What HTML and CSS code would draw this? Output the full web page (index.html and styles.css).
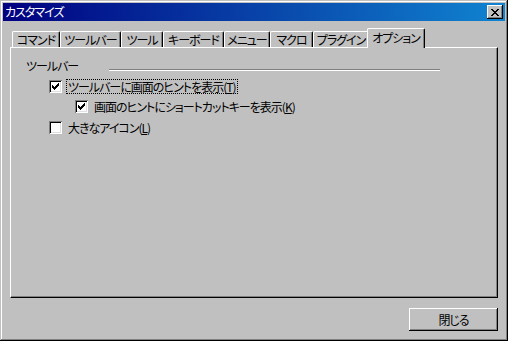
FILE: index.html
```html
<!DOCTYPE html>
<html lang="ja">
<head>
  <meta charset="UTF-8">
  <meta name="viewport" content="width=device-width, initial-scale=1.0">
  <title>カスタマイズ</title>
  <link rel="stylesheet" href="styles.css">
</head>
<body>
  <div class="window">
    <div class="titlebar">
      <span class="title">カスタマイズ</span>
      <button class="close-btn" aria-label="閉じる">
        <svg width="8" height="7" viewBox="0 0 8 7" shape-rendering="crispEdges">
          <path fill="#000" d="M0 0h2v1h-2zM6 0h2v1h-2zM1 1h2v1h-2zM5 1h2v1h-2zM2 2h4v1h-4zM3 3h2v1h-2zM2 4h4v1h-4zM1 5h2v1h-2zM5 5h2v1h-2zM0 6h2v1h-2zM6 6h2v1h-2z"/>
        </svg>
      </button>
    </div>

    <div class="dialog">
      <div class="tabs">
        <div class="tab">コマンド</div>
        <div class="tab">ツールバー</div>
        <div class="tab">ツール</div>
        <div class="tab">キーボード</div>
        <div class="tab">メニュー</div>
        <div class="tab">マクロ</div>
        <div class="tab">プラグイン</div>
        <div class="tab active">オプション</div>
      </div>

      <div class="panel">
        <div class="group-head">
          <span>ツールバー</span>
          <span class="group-line"></span>
        </div>

        <label class="check-row">
          <span class="checkbox checked">
            <svg width="7" height="7" viewBox="0 0 7 7" shape-rendering="crispEdges">
              <path fill="#000" d="M6 0h1v1h-1zM5 1h2v1h-2zM0 2h1v1h-1zM4 2h3v1h-3zM0 3h2v1h-2zM3 3h3v1h-3zM0 4h5v1h-5zM1 5h3v1h-3zM2 6h1v1h-1z"/>
            </svg>
          </span>
          <span class="check-label focused">ツールバーに画面のヒントを表示(<u>T</u>)</span>
        </label>

        <label class="check-row sub">
          <span class="checkbox checked">
            <svg width="7" height="7" viewBox="0 0 7 7" shape-rendering="crispEdges">
              <path fill="#000" d="M6 0h1v1h-1zM5 1h2v1h-2zM0 2h1v1h-1zM4 2h3v1h-3zM0 3h2v1h-2zM3 3h3v1h-3zM0 4h5v1h-5zM1 5h3v1h-3zM2 6h1v1h-1z"/>
            </svg>
          </span>
          <span class="check-label">画面のヒントにショートカットキーを表示(<u>K</u>)</span>
        </label>

        <label class="check-row">
          <span class="checkbox"></span>
          <span class="check-label">大きなアイコン(<u>L</u>)</span>
        </label>
      </div>

      <div class="footer">
        <button class="btn">閉じる</button>
      </div>
    </div>
  </div>
</body>
</html>
```

FILE: styles.css
```css
* {
  margin: 0;
  padding: 0;
  box-sizing: border-box;
}

body {
  background-color: #c0c0c0;
  font-family: "Noto Sans CJK JP", "Noto Sans", sans-serif;
  font-size: 12px;
  font-feature-settings: "palt";
  letter-spacing: -1px;
  color: #000;
}

.window {
  width: 508px;
  height: 341px;
  padding: 3px;
  background-color: #c0c0c0;
  box-shadow: inset -1px -1px #000, inset 1px 1px #c0c0c0,
              inset -2px -2px #808080, inset 2px 2px #fff;
}

.titlebar {
  height: 18px;
  display: flex;
  align-items: center;
  justify-content: space-between;
  padding-left: 2px;
  padding-right: 2px;
  background: linear-gradient(to right, #000080, #1084d0);
  color: #fff;
}

.title {
  line-height: 14px;
}

.close-btn {
  width: 16px;
  height: 14px;
  display: flex;
  align-items: center;
  justify-content: center;
  border: none;
  background-color: #c0c0c0;
  box-shadow: inset -1px -1px #000, inset 1px 1px #fff, inset -2px -2px #808080;
}

.dialog {
  padding: 7px 7px 0;
}

.tabs {
  height: 19px;
  display: flex;
  align-items: flex-end;
  padding-left: 2px;
}

.tab {
  height: 16px;
  display: flex;
  align-items: center;
  justify-content: center;
  line-height: 12px;
  padding-top: 1px;
  border-top: 1px solid #fff;
  border-left: 1px solid #fff;
  border-right: 1px solid #000;
  border-radius: 2px 2px 0 0;
  box-shadow: inset -1px 0 #808080;
  white-space: nowrap;
}

.tab:nth-child(1) { width: 48px; }
.tab:nth-child(2) { width: 61px; }
.tab:nth-child(3) { width: 42px; }
.tab:nth-child(4) { width: 61px; }
.tab:nth-child(5) { width: 46px; }
.tab:nth-child(6) { width: 43px; }
.tab:nth-child(7) { width: 56px; }

.tab.active {
  position: relative;
  z-index: 1;
  width: 58px;
  height: 20px;
  margin: 0 -2px -1px;
  padding-top: 0;
  padding-bottom: 2px;
  background-color: #c0c0c0;
}

.panel {
  width: 488px;
  height: 251px;
  padding: 11px 0 0 15px;
  border-top: 1px solid #fff;
  border-left: 1px solid #fff;
  border-right: 1px solid #000;
  border-bottom: 1px solid #000;
  box-shadow: inset -1px -1px #808080;
}

.group-head {
  width: 414px;
  height: 13px;
  display: flex;
  line-height: 13px;
}

.group-line {
  width: 331px;
  height: 2px;
  margin-top: 10px;
  margin-left: auto;
  border-top: 1px solid #808080;
  border-bottom: 1px solid #fff;
}

.check-row {
  height: 13px;
  display: flex;
  align-items: center;
  gap: 4px;
  margin-top: 8px;
  margin-left: 23px;
  line-height: 13px;
}

.check-row.sub {
  margin-top: 7px;
  margin-left: 49px;
}

.checkbox {
  width: 13px;
  height: 13px;
  display: flex;
  align-items: center;
  justify-content: center;
  background-color: #fff;
  box-shadow: inset 1px 1px #808080, inset -1px -1px #fff,
              inset 2px 2px #000, inset -2px -2px #dfdfdf;
}

.check-label {
  padding: 0 2px 0 1px;
  border: 1px solid transparent;
}

.check-label.focused {
  border: 1px dotted #000;
}

.footer {
  display: flex;
  justify-content: flex-end;
  padding-top: 10px;
}

.btn {
  width: 89px;
  height: 23px;
  border: none;
  background-color: #c0c0c0;
  font-family: inherit;
  font-size: 12px;
  font-feature-settings: "palt";
  letter-spacing: -1px;
  color: #000;
  box-shadow: inset -1px -1px #000, inset 1px 1px #fff, inset -2px -2px #808080;
}
```
